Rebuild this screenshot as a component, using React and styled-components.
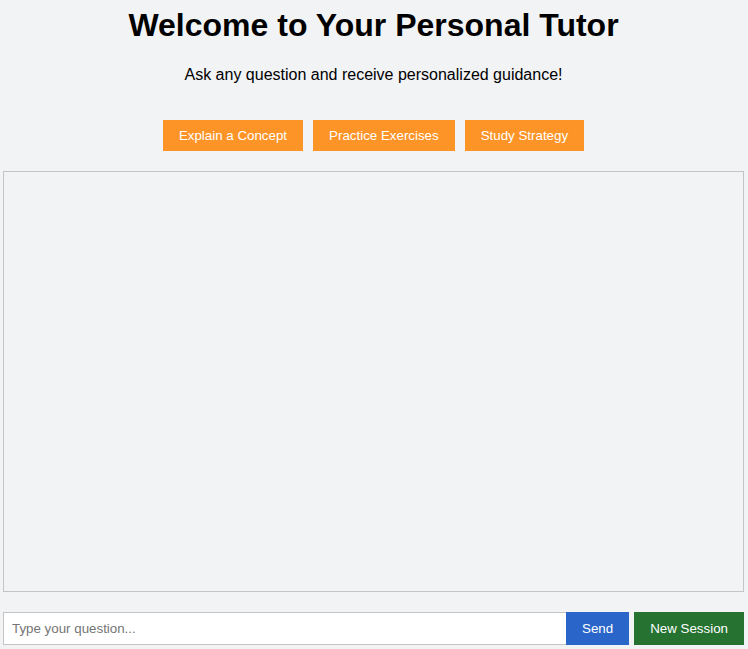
import React, { useState } from "react"
import styled, { createGlobalStyle } from "styled-components"

const GlobalStyle = createGlobalStyle`
  html, body {
    margin: 0;
    padding: 0;
    background: #f2f3f5;
    font-family: "Liberation Sans", Arial, sans-serif;
  }
`

const prompts = ["Explain a Concept", "Practice Exercises", "Study Strategy"]

const App = () => {
  const [question, setQuestion] = useState("")

  return (
    <Page>
      <GlobalStyle />
      <Title>Welcome to Your Personal Tutor</Title>
      <Subtitle>Ask any question and receive personalized guidance!</Subtitle>
      <PromptRow>
        {prompts.map((p) => (
          <PromptButton key={p} onClick={() => setQuestion(p)}>
            {p}
          </PromptButton>
        ))}
      </PromptRow>
      <ChatBox />
      <InputRow>
        <QuestionInput
          placeholder="Type your question..."
          value={question}
          onChange={(e) => setQuestion(e.target.value)}
        />
        <ActionButton $color="#2a66c9">Send</ActionButton>
        <ActionButton $color="#257231" $gap>
          New Session
        </ActionButton>
      </InputRow>
    </Page>
  )
}

export default App

const Page = styled.div`
  padding: 7px 4px 4px 3px;
  display: flex;
  flex-direction: column;
`

const Title = styled.h1`
  margin: 0;
  font-size: 32px;
  line-height: 37px;
  font-weight: bold;
  text-align: center;
  color: #000;
`

const Subtitle = styled.p`
  margin: 21px 0 0;
  font-size: 16px;
  line-height: 19px;
  text-align: center;
  color: #000;
`

const PromptRow = styled.div`
  margin-top: 36px;
  display: flex;
  justify-content: center;
  gap: 10px;
`

const PromptButton = styled.button`
  height: 31px;
  padding: 0 16px;
  border: none;
  background: #fd9427;
  color: #fff;
  font-family: inherit;
  font-size: 13.333px;
  cursor: pointer;
`

const ChatBox = styled.div`
  margin-top: 20px;
  height: 419px;
  border: 1px solid #c4c4c4;
`

const InputRow = styled.div`
  margin-top: 20px;
  display: flex;
  height: 33px;
`

const QuestionInput = styled.input`
  flex: 1;
  box-sizing: border-box;
  height: 33px;
  margin: 0;
  padding: 0 8px;
  border: 1px solid #c4c4c4;
  border-right: none;
  background: #fff;
  font-family: inherit;
  font-size: 13.333px;
  outline: none;

  &::placeholder {
    color: #757575;
  }
`

const ActionButton = styled.button`
  height: 33px;
  padding: 0 16px;
  margin-left: ${({ $gap }) => ($gap ? "5px" : "0")};
  border: none;
  background: ${({ $color }) => $color};
  color: #fff;
  font-family: inherit;
  font-size: 13.333px;
  cursor: pointer;
`
